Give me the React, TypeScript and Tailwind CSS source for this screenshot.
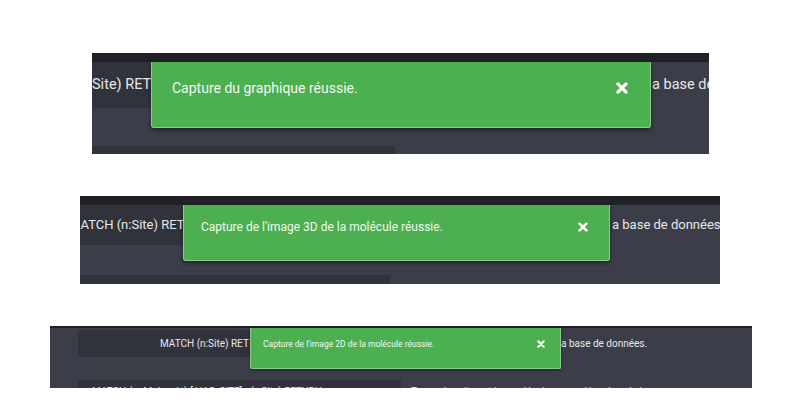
import React from 'react';

// Three cropped captures of the same success toast over a query table
const font = { fontFamily: 'Roboto, "Liberation Sans", sans-serif' };

const CloseIcon: React.FC<{ size: number }> = ({ size }) => (
  <svg width={size} height={size} viewBox="0 0 10 10" className="shrink-0">
    <path d="M1.6 1.6 L8.4 8.4 M8.4 1.6 L1.6 8.4" stroke="#ffffff" strokeWidth="2.7" strokeLinecap="round" />
  </svg>
);

const App: React.FC = () => {
  return (
    <div className="w-[788px] h-[414px] bg-white overflow-hidden flex flex-col" style={font}>
      {/* Capture 1 */}
      <div className="relative ml-[92px] mt-[53px] w-[617px] h-[101px] bg-[#3b3d48] overflow-hidden shrink-0">
        <div className="h-[9px] bg-[#1f2125]" />
        <div className="h-[46px] flex items-center">
          <div className="w-[60px] shrink-0 h-full bg-[#30333b] flex items-center overflow-hidden whitespace-nowrap text-[14.5px] text-[#e8e8ea]">
            <span>Site) RET</span>
          </div>
          <div className="ml-[500px] shrink-0 whitespace-nowrap text-[14.5px] text-[#e8e8ea]">a base de données.</div>
        </div>
        <div className="h-[38px]" />
        <div className="h-[8px] w-[303px] bg-[#30333b]" />

        <div className="absolute left-[59px] top-[9px] w-[500px] h-[66px] bg-[#4caf50] border border-t-0 border-[#8ccc8f] rounded-b-[3px] shadow-[0_2px_4px_rgba(0,0,0,0.45)] flex items-start justify-between pl-[20px] pr-[22px] pt-[18px]">
          <span className="text-[14px] leading-[16px] text-[#f1f8f1]">Capture du graphique réussie.</span>
          <span className="mt-[2px]"><CloseIcon size={12} /></span>
        </div>
      </div>

      {/* Capture 2 */}
      <div className="relative ml-[80px] mt-[42px] w-[640px] h-[88px] bg-[#3b3d48] overflow-hidden shrink-0">
        <div className="h-[9px] bg-[#1f2125]" />
        <div className="h-[40px] flex items-center">
          <div className="w-[104px] shrink-0 h-full bg-[#30333b] flex items-center overflow-hidden whitespace-nowrap text-[13px] text-[#e8e8ea]">
            <span className="-ml-[11px]">MATCH (n:Site) RET</span>
          </div>
          <div className="ml-[428px] shrink-0 whitespace-nowrap text-[13px] text-[#e8e8ea]">a base de données.</div>
        </div>
        <div className="h-[30px]" />
        <div className="h-[9px] w-[310px] bg-[#30333b]" />

        <div className="absolute left-[103px] top-[9px] w-[427px] h-[56px] bg-[#4caf50] border border-t-0 border-[#8ccc8f] rounded-b-[3px] shadow-[0_2px_4px_rgba(0,0,0,0.45)] flex items-start justify-between pl-[17px] pr-[21px] pt-[15px]">
          <span className="text-[12px] leading-[14px] text-[#f1f8f1]">Capture de l'image 3D de la molécule réussie.</span>
          <span className="mt-[2px]"><CloseIcon size={10} /></span>
        </div>
      </div>

      {/* Capture 3 */}
      <div className="relative ml-[50px] mt-[42px] w-[702px] h-[62px] bg-[#3b3e49] overflow-hidden shrink-0">
        <div className="h-[2px] bg-[#1f2125]" />
        <div className="h-[2px]" />
        <div className="h-[27px] flex items-center pl-[28px]">
          <div className="w-[173px] shrink-0 h-full bg-[#30333b] flex items-center pl-[82px] overflow-hidden whitespace-nowrap text-[10px] text-[#e8e8ea]">
            MATCH (n:Site) RET
          </div>
          <div className="ml-[310px] shrink-0 whitespace-nowrap text-[10px] text-[#e8e8ea]">a base de données.</div>
        </div>
        <div className="h-[23px]" />
        <div className="h-[8px] flex pl-[28px] overflow-hidden">
          <div className="w-[323px] shrink-0 h-full bg-[#30333b] pl-[14px] pt-[6px] whitespace-nowrap text-[10px] leading-[12px] text-[#e8e8ea] overflow-hidden">
            MATCH (m:Molecule)-[:HAS_SITE]-&gt;(s:Site) RETURN m, s
          </div>
          <div className="ml-[10px] pt-[6px] whitespace-nowrap text-[10px] leading-[12px] text-[#e8e8ea]">
            Trouve les sites et les molécules associées dans la base
          </div>
        </div>

        <div className="absolute left-[200px] top-[2px] w-[311px] h-[41px] bg-[#4caf50] border border-t-0 border-[#8ccc8f] rounded-b-[2px] shadow-[0_1px_3px_rgba(0,0,0,0.45)] flex items-start justify-between pl-[12px] pr-[15px] pt-[11px]">
          <span className="text-[8.5px] leading-[10px] text-[#f1f8f1]">Capture de l'image 2D de la molécule réussie.</span>
          <span className="mt-[1px]"><CloseIcon size={8} /></span>
        </div>
      </div>
    </div>
  );
};

export default App;
